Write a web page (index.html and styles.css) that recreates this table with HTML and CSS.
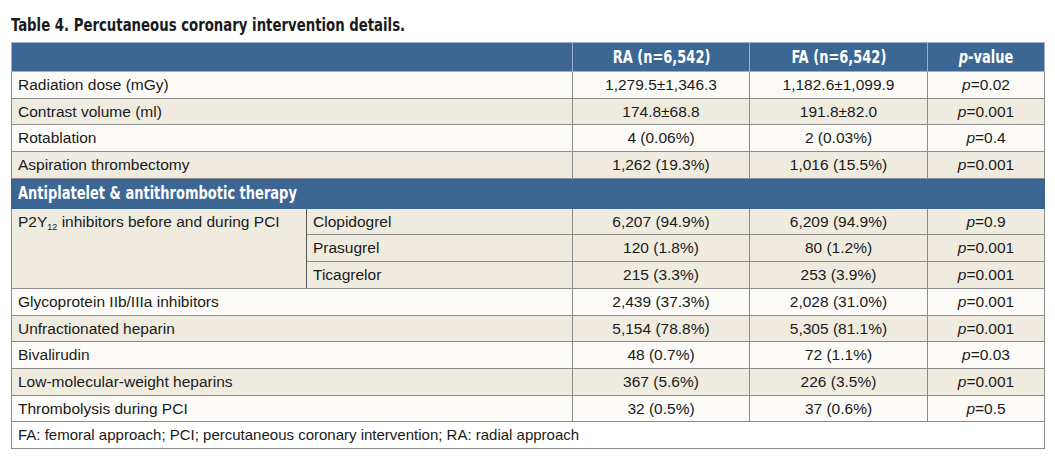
FILE: index.html
```html
<!DOCTYPE html>
<html>
<head>
<meta charset="utf-8">
<link rel="stylesheet" href="styles.css">
</head>
<body>
<div class="page">
  <h1 class="title"><span class="cond">Table 4. Percutaneous coronary intervention details.</span></h1>
  <table class="data">
    <colgroup>
      <col class="c-label">
      <col class="c-sub">
      <col class="c-ra">
      <col class="c-fa">
      <col class="c-p">
    </colgroup>
    <thead>
      <tr class="head">
        <th colspan="2"></th>
        <th><span class="cond">RA (n=6,542)</span></th>
        <th><span class="cond">FA (n=6,542)</span></th>
        <th><span class="cond"><i>p</i>-value</span></th>
      </tr>
    </thead>
    <tbody>
      <tr class="light"><td colspan="2" class="lbl">Radiation dose (mGy)</td><td>1,279.5±1,346.3</td><td>1,182.6±1,099.9</td><td><i>p</i>=0.02</td></tr>
      <tr class="dark"><td colspan="2" class="lbl">Contrast volume (ml)</td><td>174.8±68.8</td><td>191.8±82.0</td><td><i>p</i>=0.001</td></tr>
      <tr class="light"><td colspan="2" class="lbl">Rotablation</td><td>4 (0.06%)</td><td>2 (0.03%)</td><td><i>p</i>=0.4</td></tr>
      <tr class="dark"><td colspan="2" class="lbl">Aspiration thrombectomy</td><td>1,262 (19.3%)</td><td>1,016 (15.5%)</td><td><i>p</i>=0.001</td></tr>
      <tr class="section"><td colspan="5"><span class="cond">Antiplatelet &amp; antithrombotic therapy</span></td></tr>
      <tr class="dark"><td rowspan="3" class="lbl top">P2Y<sub>12</sub> inhibitors before and during PCI</td><td class="lbl">Clopidogrel</td><td>6,207 (94.9%)</td><td>6,209 (94.9%)</td><td><i>p</i>=0.9</td></tr>
      <tr class="dark"><td class="lbl">Prasugrel</td><td>120 (1.8%)</td><td>80 (1.2%)</td><td><i>p</i>=0.001</td></tr>
      <tr class="dark"><td class="lbl">Ticagrelor</td><td>215 (3.3%)</td><td>253 (3.9%)</td><td><i>p</i>=0.001</td></tr>
      <tr class="light"><td colspan="2" class="lbl">Glycoprotein IIb/IIIa inhibitors</td><td>2,439 (37.3%)</td><td>2,028 (31.0%)</td><td><i>p</i>=0.001</td></tr>
      <tr class="dark"><td colspan="2" class="lbl">Unfractionated heparin</td><td>5,154 (78.8%)</td><td>5,305 (81.1%)</td><td><i>p</i>=0.001</td></tr>
      <tr class="light"><td colspan="2" class="lbl">Bivalirudin</td><td>48 (0.7%)</td><td>72 (1.1%)</td><td><i>p</i>=0.03</td></tr>
      <tr class="dark"><td colspan="2" class="lbl">Low-molecular-weight heparins</td><td>367 (5.6%)</td><td>226 (3.5%)</td><td><i>p</i>=0.001</td></tr>
      <tr class="light"><td colspan="2" class="lbl">Thrombolysis during PCI</td><td>32 (0.5%)</td><td>37 (0.6%)</td><td><i>p</i>=0.5</td></tr>
      <tr class="foot"><td colspan="5" class="lbl">FA: femoral approach; PCI; percutaneous coronary intervention; RA: radial approach</td></tr>
    </tbody>
  </table>
</div>
</body>
</html>
```

FILE: styles.css
```css
html, body {
  margin: 0;
  padding: 0;
  background: #ffffff;
}

.page {
  padding: 14px 0 0 11px;
  font-family: "Liberation Sans", Arial, sans-serif;
  color: #1a1a1a;
}

.cond {
  display: inline-block;
  font-family: "DejaVu Sans Condensed", "DejaVu Sans", sans-serif;
  font-stretch: condensed;
  font-weight: bold;
  white-space: nowrap;
}

.title {
  margin: 0 0 6px 0;
  font-size: 18px;
  line-height: 22px;
  font-weight: bold;
  color: #1a1a1a;
}

.title .cond {
  transform: scaleX(0.82);
  transform-origin: left center;
}

.data {
  border-collapse: collapse;
  table-layout: fixed;
  width: 1034px;
  border: 1px solid #4a4a4a;
  font-size: 15.5px;
}

.c-label { width: 295px; }
.c-sub { width: 266px; }
.c-ra { width: 177px; }
.c-fa { width: 178px; }
.c-p { width: 117px; }

.data td,
.data th {
  border: 1px solid #8c8c8c;
  padding: 5px 6px 4.7px;
  line-height: 16px;
  height: 16px;
  text-align: center;
  white-space: nowrap;
}

.data td + td {
  border-left-color: #555555;
}

.data td.lbl {
  text-align: left;
}

.data td.top {
  vertical-align: top;
  border-right-color: #555555;
}

.head th {
  background: #3c6795;
  color: #ffffff;
  font-size: 17px;
  border-color: #9bb0c8;
  padding: 5.5px 6px;
  height: 16px;
}

.head th .cond {
  transform: scaleX(0.85);
}

.light td { background: #fbfaf6; }
.dark td { background: #efebdf; }

.section td {
  background: #3c6795;
  color: #ffffff;
  text-align: left;
  font-size: 17px;
  padding: 6px 6px;
  height: 16px;
  border-color: #3c6795;
}

.section .cond {
  transform: scaleX(0.85);
  transform-origin: left center;
}

.foot td {
  background: #ffffff;
  border-top-color: #555555;
  font-size: 15px;
}

sub {
  font-size: 9px;
  line-height: 0;
  vertical-align: -3px;
}

i {
  font-style: italic;
}
```
